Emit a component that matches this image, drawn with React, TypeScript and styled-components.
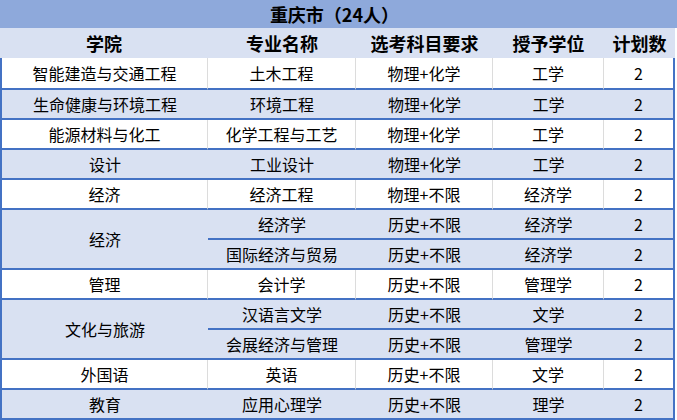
import React from "react";
import styled, { createGlobalStyle } from "styled-components";

const GlobalStyle = createGlobalStyle`
  html, body {
    margin: 0;
    padding: 0;
    background: #ffffff;
  }
  body {
    font-family: "Noto Sans CJK SC", "Noto Sans", sans-serif;
    color: #000000;
  }
`;

type Shade = "white" | "blue";

interface Major {
  name: string;
  req: string;
  degree: string;
  count: number;
}

interface Group {
  college: string;
  majors: Major[];
}

const groups: Group[] = [
  { college: "智能建造与交通工程", majors: [{ name: "土木工程", req: "物理+化学", degree: "工学", count: 2 }] },
  { college: "生命健康与环境工程", majors: [{ name: "环境工程", req: "物理+化学", degree: "工学", count: 2 }] },
  { college: "能源材料与化工", majors: [{ name: "化学工程与工艺", req: "物理+化学", degree: "工学", count: 2 }] },
  { college: "设计", majors: [{ name: "工业设计", req: "物理+化学", degree: "工学", count: 2 }] },
  { college: "经济", majors: [{ name: "经济工程", req: "物理+不限", degree: "经济学", count: 2 }] },
  {
    college: "经济",
    majors: [
      { name: "经济学", req: "历史+不限", degree: "经济学", count: 2 },
      { name: "国际经济与贸易", req: "历史+不限", degree: "经济学", count: 2 },
    ],
  },
  { college: "管理", majors: [{ name: "会计学", req: "历史+不限", degree: "管理学", count: 2 }] },
  {
    college: "文化与旅游",
    majors: [
      { name: "汉语言文学", req: "历史+不限", degree: "文学", count: 2 },
      { name: "会展经济与管理", req: "历史+不限", degree: "管理学", count: 2 },
    ],
  },
  { college: "外国语", majors: [{ name: "英语", req: "历史+不限", degree: "文学", count: 2 }] },
  { college: "教育", majors: [{ name: "应用心理学", req: "历史+不限", degree: "理学", count: 2 }] },
];

const LINE = "#4472C4";
const LIGHT = "#D9E1F2";
const TITLE = "#8EA9DB";
const SEP = "#DCDCDC";

const Page = styled.div`
  width: 677px;
  display: flex;
  flex-direction: column;
`;

const TitleBar = styled.div`
  height: 28px;
  background: ${TITLE};
  display: flex;
  align-items: center;
  justify-content: center;
  font-size: 18px;
  font-weight: 700;
  line-height: 1;
  padding-right: 8px;
`;

const Table = styled.table`
  width: 675px;
  table-layout: fixed;
  border-collapse: separate;
  border-spacing: 0;
`;

const HeadRow = styled.tr`
  background: ${LIGHT};
`;

const HeadCell = styled.th`
  height: 30px;
  padding: 0;
  font-size: 18px;
  font-weight: 700;
  line-height: 1;
  text-align: center;
  vertical-align: middle;
`;

const Row = styled.tr<{ $shade: Shade }>`
  background: ${(p) => (p.$shade === "blue" ? LIGHT : "#ffffff")};
`;

const Cell = styled.td<{ $shade: Shade; $edge?: boolean; $last?: boolean; $tall?: boolean }>`
  height: ${(p) => (p.$tall ? "30px" : "28px")};
  padding: 0;
  font-size: 16px;
  line-height: 1;
  text-align: center;
  vertical-align: middle;
  white-space: nowrap;
  border-bottom: 2px solid ${LINE};
  border-left: ${(p) => (p.$edge ? `2px solid ${LINE}` : "none")};
  border-right: ${(p) =>
    p.$last ? `2px solid ${LINE}` : p.$shade === "white" ? `1px solid ${SEP}` : "none"};
`;

export default function App() {
  let rowIndex = 0;
  return (
    <>
      <GlobalStyle />
      <Page>
        <TitleBar>重庆市（24人）</TitleBar>
        <Table>
          <colgroup>
            <col style={{ width: 208 }} />
            <col style={{ width: 148 }} />
            <col style={{ width: 137 }} />
            <col style={{ width: 111 }} />
            <col style={{ width: 71 }} />
          </colgroup>
          <thead>
            <HeadRow>
              <HeadCell>学院</HeadCell>
              <HeadCell>专业名称</HeadCell>
              <HeadCell>选考科目要求</HeadCell>
              <HeadCell>授予学位</HeadCell>
              <HeadCell>计划数</HeadCell>
            </HeadRow>
          </thead>
          <tbody>
            {groups.map((g, gi) => {
              const shade: Shade = gi % 2 === 0 ? "white" : "blue";
              return g.majors.map((m, mi) => {
                const tall = rowIndex === 0;
                rowIndex += 1;
                return (
                  <Row key={`${gi}-${mi}`} $shade={shade}>
                    {mi === 0 && (
                      <Cell $shade={shade} $edge $tall={tall} rowSpan={g.majors.length}>
                        {g.college}
                      </Cell>
                    )}
                    <Cell $shade={shade} $tall={tall}>{m.name}</Cell>
                    <Cell $shade={shade} $tall={tall}>{m.req}</Cell>
                    <Cell $shade={shade} $tall={tall}>{m.degree}</Cell>
                    <Cell $shade={shade} $tall={tall} $last>{m.count}</Cell>
                  </Row>
                );
              });
            })}
          </tbody>
        </Table>
      </Page>
    </>
  );
}
